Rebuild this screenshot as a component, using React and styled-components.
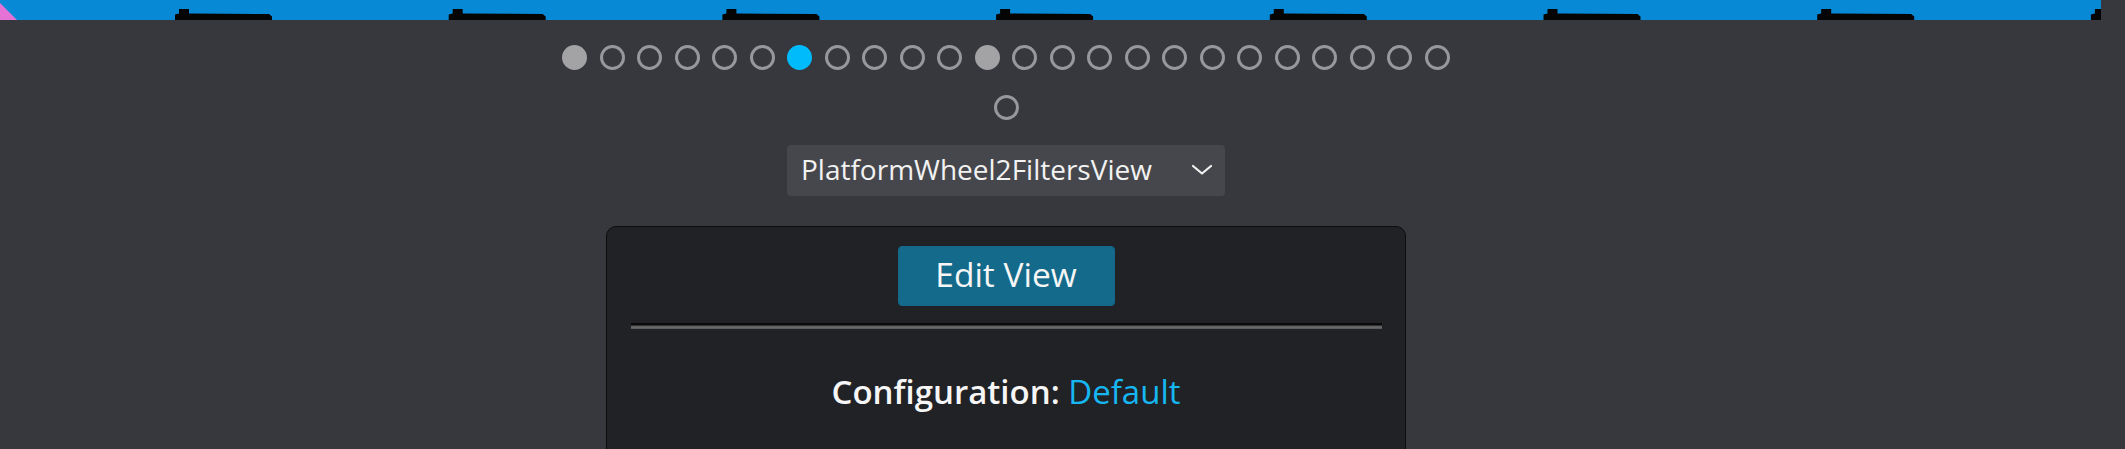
import styled, { createGlobalStyle } from "styled-components";

const GlobalStyle = createGlobalStyle`
  html, body {
    margin: 0;
    padding: 0;
    background: #37383d;
    overflow: hidden;
  }
  * {
    box-sizing: border-box;
  }
`;

const PERIOD = 273.7;
const FIRST = 175;

const views = ["PlatformWheel2FiltersView"];
const dotCount = 25;
const activeDot = 6;
const markedDots = [0, 11];

const Banner = () => {
  const marks = [];
  for (let i = 0; i < 8; i++) {
    const x = FIRST + i * PERIOD;
    marks.push(
      <g key={i} fill="#050505">
        <path d={`M${x} 20 L${x} 14.5 L${x + 4} 13.5 L${x + 4} 9 L${x + 14} 9 L${x + 14} 13.5 L${x + 94} 14 L${x + 97} 16.5 L${x + 97} 20 Z`} />
      </g>
    );
  }
  return (
    <BannerSvg width="2101" height="20" viewBox="0 0 2101 20">
      <rect x="0" y="0" width="2101" height="20" fill="#0789d6" />
      <path d="M0 3 L17 20 L0 20 Z" fill="#e672d6" />
      {marks}
    </BannerSvg>
  );
};

const Chevron = () => (
  <svg width="22" height="12" viewBox="0 0 22 12">
    <path d="M2 2 L11 9.5 L20 2" fill="none" stroke="#f2f2f2" strokeWidth="2.2" strokeLinecap="round" strokeLinejoin="round" />
  </svg>
);

const App = () => {
  return (
    <Page>
      <GlobalStyle />
      <Banner />
      <Main>
        <Pager>
          {Array.from({ length: dotCount }).map((_, i) => (
            <Dot
              key={i}
              $active={i === activeDot}
              $marked={markedDots.includes(i)}
            />
          ))}
        </Pager>
        <Select>
          <span>{views[0]}</span>
          <Chevron />
        </Select>
        <Card>
          <EditButton>Edit View</EditButton>
          <Divider />
          <ConfigLine>
            <strong>Configuration:</strong> <ConfigValue>Default</ConfigValue>
          </ConfigLine>
        </Card>
      </Main>
    </Page>
  );
};

const Page = styled.div`
  width: 2125px;
  height: 449px;
  background: #37383d;
  overflow: hidden;
  font-family: "Segoe UI", "Open Sans", "Noto Sans", sans-serif;
  color: #f4f4f4;
`;

const BannerSvg = styled.svg`
  display: block;
`;

const Main = styled.div`
  width: 2012px;
  display: flex;
  flex-direction: column;
  align-items: center;
  padding-top: 12px;
`;

const Pager = styled.div`
  width: 920px;
  display: flex;
  flex-wrap: wrap;
  justify-content: center;
`;

const Dot = styled.span`
  width: 25px;
  height: 25px;
  margin: 12.5px 6.25px;
  border-radius: 50%;
  border: 3px solid ${(p) => (p.$active ? "#00bbfb" : p.$marked ? "#a3a3a6" : "#98989c")};
  background: ${(p) => (p.$active ? "#00bbfb" : p.$marked ? "#a3a3a6" : "transparent")};
`;

const Select = styled.div`
  margin-top: 12.7px;
  width: 438px;
  height: 51px;
  display: flex;
  align-items: center;
  justify-content: space-between;
  padding: 0 12px 0 14px;
  background: #46474c;
  border-radius: 4px;
  font-size: 28px;
  color: #f2f2f2;

  span {
    position: relative;
    top: -1px;
  }
`;

const Card = styled.div`
  margin-top: 30.7px;
  width: 800px;
  height: 300px;
  background: #212226;
  border: 1px solid #0c0c0d;
  border-radius: 10px;
  display: flex;
  flex-direction: column;
  align-items: center;
  padding: 19px 24px 0;
`;

const EditButton = styled.button`
  width: 217px;
  height: 60px;
  border: 1px solid #14678a;
  border-radius: 4px;
  background: #136a8a;
  color: #f6f6f6;
  font-family: inherit;
  font-size: 33.5px;
  line-height: 1;
  padding: 0 0 4px;
  cursor: pointer;
`;

const Divider = styled.hr`
  width: 751px;
  height: 6px;
  margin: 17px 0 0;
  border: none;
  background: linear-gradient(#0a0a0b 0, #0a0a0b 2px, #5a5a5c 3px, #6e6e70 5px, #4a4a4c 6px);
`;

const ConfigLine = styled.p`
  margin: 40px 0 0;
  font-size: 33px;
  color: #f6f6f6;

  strong {
    font-weight: 600;
  }
`;

const ConfigValue = styled.span`
  color: #16b6f2;
`;

export default App;
